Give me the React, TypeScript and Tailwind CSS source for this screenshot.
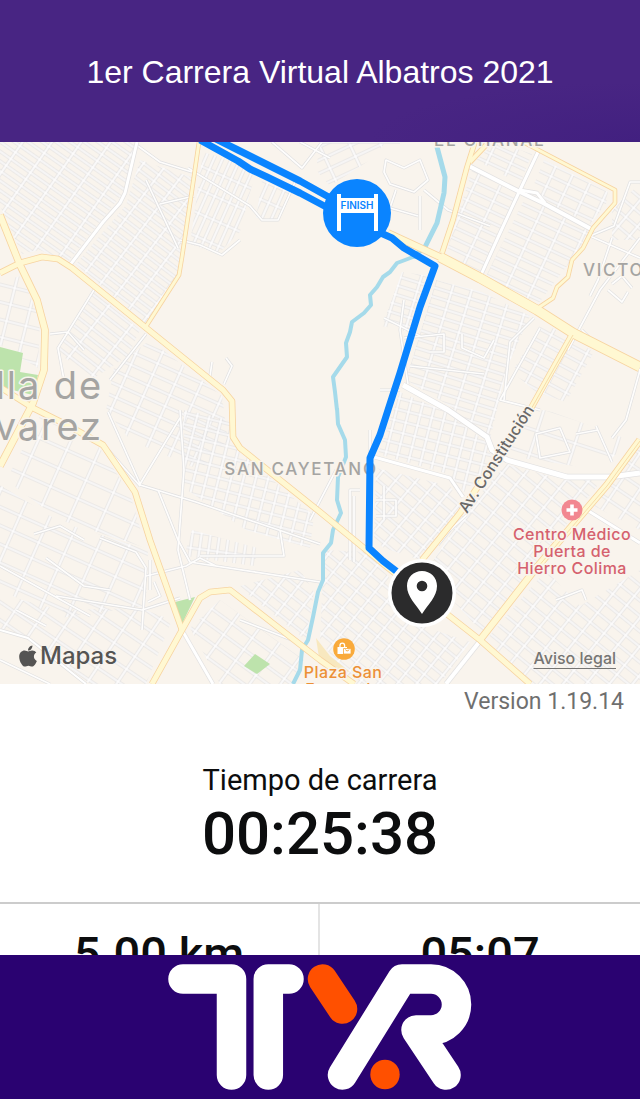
import React from "react";
import { FaApple } from "react-icons/fa";

type StreetGrid = {
  id: string;
  points: string;
  angle: number;
  w: number;
  h: number;
};

const grids: StreetGrid[] = [
  { id: "g1", points: "0,142 136,142 124,192 68,262 40,250 22,254 0,206", angle: 35, w: 24, h: 8 },
  { id: "g2", points: "140,160 194,178 180,270 146,324 76,264 126,205", angle: 37, w: 19, h: 8 },
  { id: "g3", points: "203,152 235,162 256,172 248,200 240,232 218,254 190,244", angle: 24, w: 8, h: 22 },
  { id: "g4", points: "262,180 290,192 278,220 256,218", angle: 24, w: 9, h: 18 },
  { id: "g5", points: "92,290 140,330 128,356 94,378 56,352", angle: 38, w: 30, h: 9 },
  { id: "g6", points: "0,280 22,276 40,320 38,368 0,345", angle: 14, w: 20, h: 17 },
  { id: "g7", points: "114,368 150,340 222,396 228,440 200,470 130,440 106,410", angle: 24, w: 24, h: 12 },
  { id: "g8", points: "184,410 230,420 236,448 314,516 310,548 246,530 184,488", angle: 14, w: 12, h: 11 },
  { id: "g9", points: "40,416 100,448 130,494 146,548 60,520 6,480", angle: 24, w: 30, h: 20 },
  { id: "g10", points: "0,485 60,522 148,550 146,606 60,618 0,590", angle: 24, w: 28, h: 17 },
  { id: "g11", points: "0,594 60,610 140,608 172,620 146,684 90,684 26,636 0,628", angle: 34, w: 25, h: 15 },
  { id: "g12", points: "192,530 258,548 254,566 184,556", angle: 8, w: 9, h: 16 },
  { id: "g13", points: "240,586 300,570 314,592 306,640 250,596", angle: 38, w: 16, h: 11 },
  { id: "g14", points: "190,628 220,600 304,660 292,684 220,684", angle: 36, w: 25, h: 14 },
  { id: "g15", points: "472,170 520,196 480,272 446,254", angle: 25, w: 24, h: 10 },
  { id: "g16", points: "526,196 590,232 570,262 538,304 486,276", angle: 25, w: 24, h: 10 },
  { id: "g17", points: "496,142 532,154 520,184 476,160", angle: 25, w: 22, h: 9 },
  { id: "g18", points: "544,160 608,192 606,204 590,224 530,194", angle: 25, w: 19, h: 11 },
  { id: "g19", points: "436,280 482,292 530,316 506,370 490,440 450,406 406,380", angle: 17, w: 19, h: 9 },
  { id: "g20", points: "402,272 430,276 410,332 382,326", angle: 17, w: 20, h: 9 },
  { id: "g21", points: "542,322 594,352 566,402 536,392 512,372", angle: 28, w: 20, h: 11 },
  { id: "g22", points: "400,392 446,412 486,442 494,464 464,492 448,474 378,454", angle: 14, w: 12, h: 11 },
  { id: "g23", points: "376,468 450,486 462,506 420,560 384,548 374,540", angle: 40, w: 16, h: 11 },
  { id: "g24", points: "506,464 564,480 602,480 530,570 482,632 426,572 466,510", angle: 39, w: 18, h: 12 },
  { id: "g25", points: "514,404 552,412 630,440 600,470 510,456", angle: 18, w: 40, h: 24 },
  { id: "g26", points: "324,550 368,552 396,586 410,622 470,642 440,684 352,684 320,640", angle: 39, w: 15, h: 11 },
  { id: "g27", points: "546,570 580,606 640,570 640,684 534,684 486,640", angle: 39, w: 18, h: 12 },
  { id: "g28", points: "620,462 640,446 640,530 594,506", angle: 34, w: 20, h: 14 },
  { id: "g29", points: "320,142 386,142 370,160 330,186 316,170", angle: -25, w: 28, h: 12 },
  { id: "g30", points: "612,208 640,184 640,240 612,240", angle: 40, w: 15, h: 12 },
];

const lanes: string[] = [
  "M138 146L160 162L192 172 M146 180L178 248 M160 204L194 196 M188 168L250 206L262 220H278L296 180",
  "M180 240L200 245L222 255L240 240 M300 142L330 158 M272 142L302 168L322 142",
  "M94 290L58 348L64 380 M50 334L68 332L84 350 M146 334L110 380 M210 376L212 362 M224 384L232 366L226 358",
  "M108 412L140 484L180 418 M180 410L184 470L178 550L190 600 M140 485L196 502L320 544 M104 445L140 486",
  "M158 490L178 540L190 562L320 582 M146 576L186 566L200 558L216 566 M56 596L142 610L180 598",
  "M100 538L136 552L146 568L142 630 M34 534L60 526L84 540 M46 558L84 586L110 590 M150 560V590 M0 566L90 616",
  "M320 142L400 142 M386 160L404 168L420 160L428 180L414 192L390 184L384 172Z M396 190L390 208L418 216 M420 196L420 230 M424 190L448 210L490 226",
  "M640 182H630L614 226L590 236L640 258 M640 238L600 290L568 350 M612 238L598 280L590 296 M608 290L622 302L628 292 M612 284L622 276L632 288",
  "M582 330L596 344L640 370L626 420L612 438 M534 318L510 342L504 400 M540 328L500 400L540 410 M404 300L400 330L408 384",
  "M404 338L444 334V352H430 M462 334V348L484 358L494 340 M410 366L484 374 M384 318L420 336 M380 390H400",
  "M350 560V490H360 M354 562V496 M376 500H396V516H376 M384 486V520 M438 545L450 530L470 512 M336 470L310 520",
  "M370 430V500 M536 434L560 428L570 452L540 458Z M596 426L612 462 M576 434L598 430",
  "M200 556H284L280 530 M154 582L160 596L148 602 M0 660L50 684 M16 610L46 626 M240 620L292 640 M556 600L582 590L586 600",
];

const majorRoads: { d: string; w: number }[] = [
  { d: "M199 142L192 190L182 257L179 275L145 328", w: 3 },
  { d: "M0 273L20 263L42 257L58 259L72 268L145 327L223 390L232 401L233 437L240 448L320 512L387 567L480 640L530 684", w: 5 },
  { d: "M0 215L20 265L37 300L45 330L44 370L33 403L0 466", w: 6 },
  { d: "M0 387L33 408L67 425L103 445L135 492L150 540L182 630", w: 5 },
  { d: "M152 684L182 630L200 598L210 592L230 590L320 660L354 684", w: 5 },
  { d: "M475 142L467 167L453 220L442 253", w: 4 },
  { d: "M486 145L470 162", w: 4 },
  { d: "M523 142L567 165L615 190V203L593 228L583 248L572 260L568 277L557 287L553 298L538 308", w: 3 },
  { d: "M573 333L530 410L460 513L422 560", w: 5 },
  { d: "M640 440L607 485L537 567L480 640", w: 6 },
  { d: "M388 233L440 257L480 278L524 302", w: 6 },
  { d: "M440 257L480 278L537 310L573 333L640 367", w: 9 },
];

const whiteRoads: { d: string; w: number }[] = [
  { d: "M137 142L125 193L120 203L103 222L70 265", w: 3 },
  { d: "M182 630L213 684", w: 3 },
  { d: "M0 630L28 638L86 684", w: 2 },
  { d: "M467 165L520 192L543 203L593 230", w: 4 },
  { d: "M520 190L537 193L545 203", w: 3 },
  { d: "M538 152L520 190L500 233L480 277", w: 3 },
  { d: "M403 385L448 410L487 437L492 450L507 460L567 477H610L640 473", w: 5 },
  { d: "M374 457L450 478L463 497", w: 3 },
  { d: "M480 641L446 684", w: 4 },
  { d: "M587 510L640 543", w: 3 },
];

function RaceMap() {
  return (
    <svg
      viewBox="0 142 640 542"
      preserveAspectRatio="xMidYMid slice"
      className="block h-full w-full"
      role="img"
      aria-label="Mapa del recorrido"
      fontFamily="Inter, 'Liberation Sans', sans-serif"
    >
      <defs>
        {grids.map((g) => (
          <pattern
            key={g.id}
            id={g.id}
            width={g.w}
            height={g.h}
            patternUnits="userSpaceOnUse"
            patternTransform={`rotate(${g.angle})`}
          >
            <path d={`M0 4H${g.w}M4 0V${g.h}`} stroke="#e0e0e1" strokeWidth="3" />
            <path d={`M0 4H${g.w}M4 0V${g.h}`} stroke="#fefdfc" strokeWidth="1.7" />
          </pattern>
        ))}
      </defs>
      <rect y="142" width="640" height="542" fill="#f9f4ed" />
      {grids.map((g) => (
        <polygon key={g.id} points={g.points} fill={`url(#${g.id})`} />
      ))}
      <g fill="#bde3ac">
        <path d="M0 347L23 353L20 372L38 375L33 395L0 387Z" />
        <path d="M175 602L195 597L182 624Z" />
        <path d="M244 666L255 654L270 664L257 674Z" />
      </g>
      <path d="M316 638L330 656L350 672L320 664Z" fill="#f8e8bf" />
      <g fill="none" strokeLinejoin="round">
        {lanes.map((d) => (
          <path key={d} d={d} stroke="#e0e0e1" strokeWidth="3" />
        ))}
        {lanes.map((d) => (
          <path key={d} d={d} stroke="#fefdfc" strokeWidth="1.7" />
        ))}
        <path
          d="M437 147L445 177L444 193L437 223L425 247L413 257"
          stroke="#a5daea"
          strokeWidth="5"
        />
        <path
          d="M420 255L413 257L397 263L390 272L383 277L377 287L370 295L371 305L364 313L352 322L350 332L346 343L347 357L340 367L333 377L335 392L337 410"
          stroke="#a5daea"
          strokeWidth="4"
        />
        <path
          d="M337 408L338 424L345 440L346 457L338 477L337 500L341 513L333 530L331 543L323 553V580L318 592L313 617L308 640L302 650L300 670L293 684"
          stroke="#a5daea"
          strokeWidth="4"
        />
        {whiteRoads.map((r) => (
          <path key={r.d} d={r.d} stroke="#e2e1e1" strokeWidth={r.w + 1.4} />
        ))}
        {whiteRoads.map((r) => (
          <path key={r.d} d={r.d} stroke="#ffffff" strokeWidth={r.w} />
        ))}
        {majorRoads.map((r) => (
          <path key={r.d} d={r.d} stroke="#f7d3a0" strokeWidth={r.w + 1.6} />
        ))}
        {majorRoads.map((r) => (
          <path key={r.d} d={r.d} stroke="#fff8d2" strokeWidth={r.w} />
        ))}
        <path d="M573 335L530 411M640 441L607 486L537 568" stroke="#f7dca8" strokeWidth="1" />
      </g>

      <g
        fill="#a5a4a2"
        stroke="#f9f4ed"
        strokeWidth="3"
        paintOrder="stroke"
        strokeLinejoin="round"
      >
        <text x="103" y="399" textAnchor="end" className="text-[38px] tracking-wider">
          Villa de
        </text>
        <text x="103" y="440" textAnchor="end" className="text-[38px] tracking-wider">
          Álvarez
        </text>
        <text x="301" y="475" textAnchor="middle" className="text-[17px] font-medium tracking-widest">
          SAN CAYETANO
        </text>
        <text x="434" y="146" className="text-[17px] font-medium tracking-widest">
          EL CHANAL
        </text>
        <text x="583" y="276" className="text-[17px] font-medium tracking-widest">
          VICTORIA
        </text>
      </g>
      <text
        transform="translate(467 514) rotate(-57)"
        className="text-[16px] font-medium"
        fill="#6a6968"
        stroke="#f9f4ed"
        strokeWidth="3"
        paintOrder="stroke"
      >
        Av. Constitución
      </text>

      <g fill="none" stroke="#0a84ff" strokeLinejoin="round" strokeWidth="7">
        <path d="M200 140L238 161L250 169L267 177L300 193L330 209" />
        <path d="M214 138L238 150L270 166L300 181L334 200" />
        <path d="M374 230L392 238L404 248L435 266L420 307L400 373L388 410L380 435L370 458L369 548L383 561L400 574" />
      </g>

      <circle cx="357" cy="213" r="34" fill="#0a84ff" />
      <path d="M337 194H341V198H374V194H378V231H374V213H341V231H337Z" fill="#ffffff" />
      <text x="357" y="209" textAnchor="middle" className="text-[10px] font-semibold" fill="#0a84ff">
        FINISH
      </text>

      <circle cx="422" cy="593" r="34" fill="#ffffff" />
      <circle cx="422" cy="593" r="30.5" fill="#2b2b2c" />
      <path
        fill="#ffffff"
        fillRule="evenodd"
        d="M422 571C413.5 571 407 577.5 407 586C407 597 416 604 422 614C428 604 437 597 437 586C437 577.5 430.5 571 422 571ZM422 580.7A5.3 5.3 0 1 1 422 591.3A5.3 5.3 0 1 1 422 580.7Z"
      />

      <circle cx="572" cy="510" r="10.5" fill="#f28790" />
      <path d="M572 504.5V515.5M566.5 510H577.5" stroke="#ffffff" strokeWidth="3.6" />
      <g
        fill="#d5616e"
        stroke="#f9f4ed"
        strokeWidth="3"
        paintOrder="stroke"
        textAnchor="middle"
        className="text-[16px] font-medium tracking-wide"
      >
        <text x="572" y="540">Centro Médico</text>
        <text x="572" y="557">Puerta de</text>
        <text x="572" y="574">Hierro Colima</text>
      </g>

      <circle cx="344" cy="649" r="10.8" fill="#f9aa3b" />
      <path d="M337.5 647H347V654H337.5Z" fill="#ffffff" />
      <path d="M340 647V645.5A2.3 2.3 0 0 1 344.6 645.5V647" fill="none" stroke="#ffffff" strokeWidth="1.3" />
      <path d="M343.5 648.5H351V654H343.5Z" fill="#ffffff" stroke="#f9aa3b" strokeWidth=".8" />
      <path d="M345.5 649.5A1.8 1.8 0 0 0 349 649.5" fill="none" stroke="#f9aa3b" strokeWidth="1" />
      <g
        fill="#ec9036"
        stroke="#f9f4ed"
        strokeWidth="3"
        paintOrder="stroke"
        textAnchor="middle"
        className="text-[16px] font-medium tracking-wide"
      >
        <text x="343" y="678">Plaza San</text>
        <text x="343" y="695">Fernando</text>
      </g>
    </svg>
  );
}

function TyrLogo() {
  return (
    <svg viewBox="168 964 304 126" className="h-[126px] w-[304px]" role="img" aria-label="TYR">
      <g fill="none" stroke="#ffffff" strokeWidth="29.5" strokeLinecap="round" strokeLinejoin="round">
        <path d="M183 979H231.5V1075" />
        <path d="M289 979H268.3V1075" />
        <path d="M342.5 1075L402 979H431A25.5 25.5 0 0 1 431 1030H416L446 1075" />
      </g>
      <path d="M322.5 979L342.5 1009" stroke="#ff5000" strokeWidth="29.5" strokeLinecap="round" />
      <circle cx="385" cy="1074.5" r="14.7" fill="#ff5000" />
    </svg>
  );
}

export default function App() {
  return (
    <div className="flex h-screen flex-col overflow-hidden bg-white font-[Roboto,sans-serif] text-[#0c0d0e]">
      <header className="flex h-[142px] shrink-0 items-center justify-center bg-[#482583] bg-[radial-gradient(ellipse_at_100%_100%,#422080_0%,#482583_30%)] px-4 pt-0.5">
        <h1 className="text-center font-['Liberation_Sans',sans-serif] text-[32px] leading-10 text-white">
          1er Carrera Virtual Albatros 2021
        </h1>
      </header>

      <main className="min-h-0 flex-1 overflow-hidden">
        <section className="relative aspect-[640/542] w-full overflow-hidden">
          <RaceMap />
          <div className="absolute bottom-3 left-4 flex items-center font-[Inter,sans-serif] text-[24px] leading-8 font-medium text-[#555453]">
            <FaApple className="size-6" />
            <span>Mapas</span>
          </div>
          <a
            href="#legal"
            className="absolute right-6 bottom-4 font-[Inter,sans-serif] text-[16px] leading-5 font-medium text-[#767573] underline underline-offset-4"
          >
            Aviso legal
          </a>
        </section>

        <p className="px-4 pt-0.5 text-right text-[23px] leading-8 text-[#6f6f6f]">Version 1.19.14</p>

        <section className="flex flex-col items-center pt-11 pb-8">
          <h2 className="text-[29px] leading-9">Tiempo de carrera</h2>
          <p className="text-[60px] leading-[72px] font-medium">00:25:38</p>
        </section>

        <section className="grid grid-cols-2 divide-x-2 divide-[#e4e4e4] border-t-2 border-[#cccccc] text-center text-[47px] leading-[60px] font-medium">
          <p className="pt-5 pb-8">5.00 km</p>
          <p className="pt-5 pb-8">05:07</p>
        </section>
      </main>

      <footer className="flex h-[144px] shrink-0 items-center justify-center bg-[#2a0271]">
        <TyrLogo />
      </footer>
    </div>
  );
}
